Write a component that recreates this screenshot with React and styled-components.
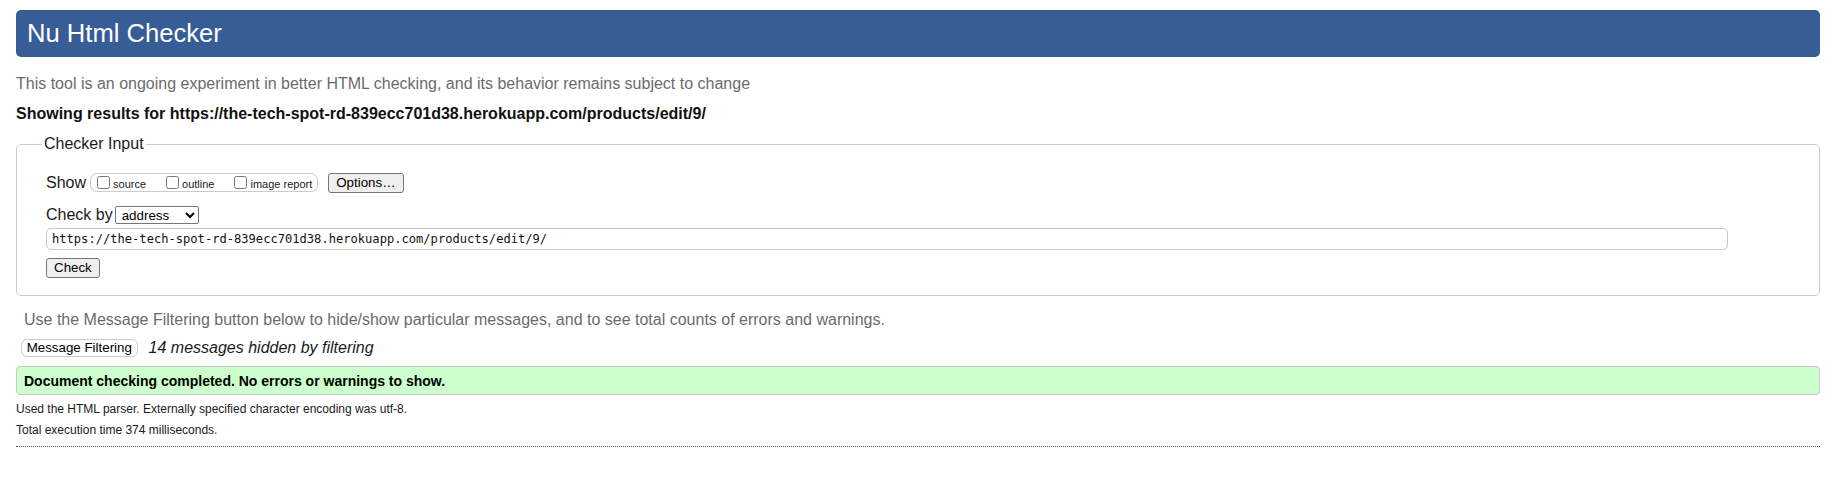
import React from 'react';
import styled, { createGlobalStyle } from 'styled-components';

const GlobalStyle = createGlobalStyle`
  html, body { margin: 0; padding: 0; background: #ffffff; }
  body {
    font-family: "Liberation Sans", Arial, sans-serif;
    font-size: 16px;
    color: #1a1a1a;
  }
`;

const Page = styled.div`
  padding: 10px 21px 0 16px;
`;

const Header = styled.h1`
  margin: 0;
  height: 47px;
  box-sizing: border-box;
  display: flex;
  align-items: center;
  padding: 0 11px;
  background: #365d95;
  color: #ffffff;
  border-radius: 5px;
  font-size: 25.6px;
  font-weight: normal;
`;

const Paragraph = styled.p`
  margin: ${(p) => p.$top}px 0 0 ${(p) => p.$left || 0}px;
  line-height: 18.4px;
  color: ${(p) => (p.$muted ? '#6b6b6b' : '#111111')};
  font-weight: ${(p) => (p.$bold ? 'bold' : 'normal')};
`;

const Fieldset = styled.fieldset`
  margin: 11.6px 0 0;
  padding: 19px 29px 17px 29px;
  border: 1px solid #cccccc;
  border-radius: 5px;
  min-width: 0;
`;

const Legend = styled.legend`
  margin-left: -4px;
  padding: 0 2px;
  font-size: 16px;
  line-height: 18.4px;
  color: #1a1a1a;
`;

const Row = styled.div`
  display: flex;
  align-items: center;
  height: ${(p) => p.$h}px;
  margin-top: ${(p) => p.$top || 0}px;
`;

const RowLabel = styled.span`
  font-size: 16px;
  line-height: 18.4px;
  color: #1a1a1a;
`;

const ShowGroup = styled.span`
  display: inline-flex;
  align-items: center;
  height: 19px;
  box-sizing: border-box;
  margin-left: 4px;
  padding: 0 5px 0 2px;
  border: 1px solid #cccccc;
  border-radius: 7px;
`;

const OptionLabel = styled.label`
  display: inline-flex;
  align-items: center;
  font-size: 11px;
  padding-top: 2px;
  color: #1a1a1a;
  & + & { margin-left: 16px; }
`;

const Checkbox = styled.input.attrs({ type: 'checkbox' })`
  width: 13px;
  height: 13px;
  margin: -2px 3px 0 4px;
`;

const GrayButton = styled.button`
  height: 20px;
  box-sizing: border-box;
  margin: ${(p) => p.$top || 0}px 0 0 ${(p) => p.$left || 0}px;
  padding: 0 7px;
  border: 1px solid #767676;
  border-radius: 3px;
  background: #efefef;
  color: #000000;
  font-family: "Liberation Sans", Arial, sans-serif;
  font-size: 13.33px;
  display: ${(p) => (p.$block ? 'block' : 'inline-block')};
`;

const Select = styled.select`
  width: 84px;
  height: 18px;
  margin-left: 2px;
  padding: 0 2px;
  border: 1px solid #767676;
  border-radius: 2px;
  background: #ffffff;
  color: #000000;
  font-family: "Liberation Sans", Arial, sans-serif;
  font-size: 13.33px;
`;

const UrlInput = styled.input`
  display: block;
  width: 1682px;
  height: 22px;
  box-sizing: border-box;
  margin: 3px 0 0;
  padding: 0 5px;
  border: 1px solid #c8c8c8;
  border-radius: 5px;
  font-family: "DejaVu Sans Mono", "Liberation Mono", monospace;
  font-size: 12.1px;
  color: #111111;
`;

const FilterButton = styled.button`
  height: 18px;
  box-sizing: border-box;
  margin-left: 4.7px;
  padding: 0 5px;
  border: 1px solid #cccccc;
  border-radius: 6px;
  background: #ffffff;
  color: #000000;
  font-family: "Liberation Sans", Arial, sans-serif;
  font-size: 13.33px;
`;

const HiddenNote = styled.span`
  margin-left: 10.7px;
  font-style: italic;
  font-size: 16px;
  color: #1a1a1a;
`;

const SuccessBox = styled.div`
  margin-top: 9px;
  height: 29px;
  box-sizing: border-box;
  display: flex;
  align-items: center;
  padding-left: 7px;
  border: 1px solid #c8c8c8;
  border-radius: 4px;
  background: #ccffcc;
  font-weight: bold;
  font-size: 14px;
  color: #000000;
`;

const Detail = styled.p`
  margin: ${(p) => p.$top}px 0 0;
  font-size: 12px;
  line-height: 13.8px;
  color: #1a1a1a;
`;

const DottedRule = styled.div`
  margin-top: 8.2px;
  border-top: 1px dotted #555555;
`;

export default function App() {
  const url = 'https://the-tech-spot-rd-839ecc701d38.herokuapp.com/products/edit/9/';
  return (
    <>
      <GlobalStyle />
      <Page>
        <Header>Nu Html Checker</Header>
        <Paragraph $top={17.6} $muted>
          This tool is an ongoing experiment in better HTML checking, and its behavior remains subject to change
        </Paragraph>
        <Paragraph $top={12.3} $bold>
          Showing results for {url}
        </Paragraph>
        <Fieldset>
          <Legend>Checker Input</Legend>
          <Row $h={20}>
            <RowLabel>Show</RowLabel>
            <ShowGroup>
              <OptionLabel><Checkbox />source</OptionLabel>
              <OptionLabel><Checkbox />outline</OptionLabel>
              <OptionLabel><Checkbox />image report</OptionLabel>
            </ShowGroup>
            <GrayButton $left={10}>Options…</GrayButton>
          </Row>
          <Row $h={19} $top={13}>
            <RowLabel>Check by</RowLabel>
            <Select defaultValue="address">
              <option value="address">address</option>
              <option value="file">file upload</option>
              <option value="text">text input</option>
            </Select>
          </Row>
          <UrlInput type="url" defaultValue={url} />
          <GrayButton $top={8} $block>Check</GrayButton>
        </Fieldset>
        <Paragraph $top={15.5} $left={8} $muted>
          Use the Message Filtering button below to hide/show particular messages, and to see total counts of errors and warnings.
        </Paragraph>
        <Row $h={18.4} $top={9}>
          <FilterButton>Message Filtering</FilterButton>
          <HiddenNote>14 messages hidden by filtering</HiddenNote>
        </Row>
        <SuccessBox>Document checking completed. No errors or warnings to show.</SuccessBox>
        <Detail $top={8}>Used the HTML parser. Externally specified character encoding was utf-8.</Detail>
        <Detail $top={7.2}>Total execution time 374 milliseconds.</Detail>
        <DottedRule />
      </Page>
    </>
  );
}
